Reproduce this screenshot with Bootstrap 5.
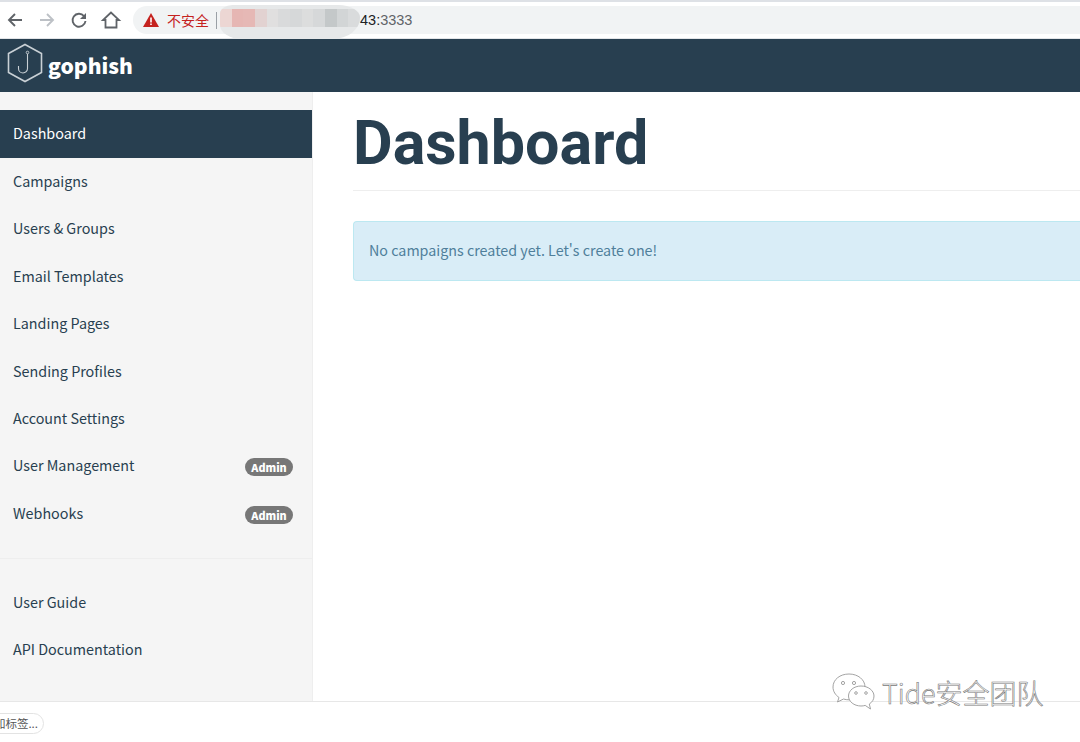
<!DOCTYPE html>
<html lang="zh"><head><meta charset="utf-8"><title>Gophish</title>
<link href="https://cdn.jsdelivr.net/npm/bootstrap@5.3.0/dist/css/bootstrap.min.css" rel="stylesheet">
<style>
html,body{height:742px;overflow:hidden;background:#fff}
body{font-family:"Noto Sans CJK SC","Liberation Sans",sans-serif;position:relative;width:1080px}
.top-strip{height:2px;background:#dee1e6}
.chrome-bar{height:37px;background:#fff;border-bottom:1px solid #e3e5e8;padding-left:0}
.chrome-btn{width:32px;height:24px;flex:none;margin-right:0}
.chrome-btn.first{margin-left:-1px}
.omni{height:28px;flex:1;margin-left:6px;background:#f1f3f4;border-radius:14px 0 0 14px;padding-left:10px;font-size:14.5px;position:relative;line-height:28px;white-space:nowrap}
.warn-txt{color:#c5221f;margin-left:8px;font-size:14px}
.omni-sep{width:1px;height:17px;background:#9aa0a6;margin:0 8px 0 7px}
.host-hide{width:135px;flex:none}
.port-a{color:#202124;font-family:"Liberation Sans",sans-serif}.port-b{color:#5f6368;font-family:"Liberation Sans",sans-serif}
.smear{position:absolute;left:87px;top:-1px;width:140px;height:34px;display:flex;background:#e6e8e9;border-radius:14px 24px 30px 24px/10px 14px 24px 16px;overflow:hidden;padding:4px 0 12px}
.smear i{flex:1;display:block}
.gp-nav{height:53px;background:#283f50;padding:0 0 0 7px}
.gp-logo{margin-bottom:5px}
.gp-brand{color:#fff;font-weight:900;font-size:21px;line-height:1;margin-left:5px;padding-bottom:1px}
.gp-body{height:609px}
.gp-side{width:313px;flex:none;background:#f5f5f5;border-right:1px solid #eee;padding-top:18px}
.gp-link{display:flex;align-items:center;justify-content:space-between;height:47.43px;padding:0 19px 2px 13px;color:#283f50;font-size:14.35px;text-decoration:none}
.gp-link.on{background:#283f50;color:#fff;height:48px}
.gp-link.low{height:47px}
.gp-badge{background:#777;color:#fff;font-size:10.8px;font-weight:900;border-radius:10px;height:18px;line-height:18px;width:48px;text-align:center;margin-top:4px}
.gp-rule{border-top:1px solid #eee;margin:21px 0 20px}
.gp-main{flex:1;padding:0 0 0 40px;min-width:0}
.gp-title{font-family:Roboto,sans-serif;font-weight:700;font-size:61px;color:#283f50;line-height:70px;margin:0;padding-top:16px}
.gp-head{border-bottom:1px solid #eee;height:99px}
.gp-alert{margin-top:30px;height:60px;background:#d9edf7;border:1px solid #bce8f1;border-right:0;border-radius:4px 0 0 4px;color:#4f7f9b;font-size:14.3px;padding:0 15px;line-height:55px}
.gp-foot{height:41px;border-top:1px solid #e7e7e7;background:#fff;position:relative}
.tab-bubble{position:absolute;left:-8px;top:11px;width:52px;height:21px;background:#fff;border:1px solid #e3e3e3;border-radius:0 11px 11px 0;font-size:11.5px;line-height:19px;color:#555;white-space:nowrap;text-align:right;padding-right:5px;overflow:hidden}
.mark-wm{position:absolute;left:832px;top:673px;display:flex;align-items:center;gap:6px;color:#fff;font-size:27px;line-height:1;-webkit-text-stroke:.6px #777;font-weight:300}
</style></head><body>
<div class="top-strip"></div>
<div class="chrome-bar d-flex align-items-center">
  <svg class="chrome-btn first" viewBox="0 0 32 24" fill="none" stroke="#5f6368" stroke-width="1.9"><path d="M23 12H10M16 6l-6 6 6 6"/></svg>
  <svg class="chrome-btn" viewBox="0 0 32 24" fill="none" stroke="#bdc1c6" stroke-width="1.9"><path d="M9 12h13M16 6l6 6-6 6"/></svg>
  <svg class="chrome-btn" viewBox="0 0 32 24" fill="none" stroke="#5f6368" stroke-width="1.9"><path d="M21 8A6.500 6.500 0 1 0 22.500 13"/><path d="M23 5v6h-6z" fill="#5f6368" stroke="none"/></svg>
  <svg class="chrome-btn" viewBox="0 0 32 24" fill="none" stroke="#5f6368" stroke-width="1.8"><path d="M16 4.500 8 12h2.500v7.500h11V12H24z"/></svg>
  <div class="omni d-flex align-items-center">
    <svg width="16" height="14" viewBox="0 0 16 14"><path d="M8 0 16 14H0z" fill="#c5221f"/><path d="M7.200 4.500h1.600v5H7.200zM7.200 10.500h1.600v1.600H7.200z" fill="#fff"/></svg>
    <span class="warn-txt">不安全</span><span class="omni-sep"></span><span class="host-hide"></span><span class="port-a">43:</span><span class="port-b">3333</span>
    <div class="smear" aria-hidden="true"><i style="background:#ecd6d3"></i><i style="background:#e6b6b3"></i><i style="background:#e6b8b5"></i><i style="background:#e2d2d1"></i><i style="background:#e0dfdf"></i><i style="background:#d9dadb"></i><i style="background:#d6d8d9"></i><i style="background:#dcdddd"></i><i style="background:#d6d8d9"></i><i style="background:#c4c8c9"></i><i style="background:#d2d5d6"></i><i style="background:#d9dbdc"></i></div>
  </div>
</div>
<nav class="gp-nav d-flex align-items-center">
  <svg class="gp-logo" width="36" height="40" viewBox="0 0 36 40" fill="none" stroke="#c9d0d5" stroke-width="1.600"><path d="M18 1.500 34.500 10.500v19L18 38.500 1.500 29.500v-19z"/><path d="M20.500 11v14.500a4.500 4.500 0 0 1-9 0v-2.500" stroke-width="1.100"/><circle cx="20.500" cy="9.500" r="1.300" stroke-width=".9"/></svg>
  <span class="gp-brand">gophish</span>
</nav>
<div class="gp-body d-flex">
  <aside class="gp-side">
    <a class="gp-link on" href="#">Dashboard</a>
    <a class="gp-link" href="#">Campaigns</a>
    <a class="gp-link" href="#">Users &amp; Groups</a>
    <a class="gp-link" href="#">Email Templates</a>
    <a class="gp-link" href="#">Landing Pages</a>
    <a class="gp-link" href="#">Sending Profiles</a>
    <a class="gp-link" href="#">Account Settings</a>
    <a class="gp-link" href="#">User Management<span class="gp-badge">Admin</span></a>
    <a class="gp-link" href="#">Webhooks<span class="gp-badge">Admin</span></a>
    <div class="gp-rule"></div>
    <a class="gp-link low" href="#">User Guide</a>
    <a class="gp-link low" href="#">API Documentation</a>
  </aside>
  <main class="gp-main">
    <div class="gp-head"><h1 class="gp-title">Dashboard</h1></div>
    <div class="gp-alert">No campaigns created yet. Let's create one!</div>
  </main>
</div>
<div class="gp-foot"><div class="tab-bubble">加标签...</div></div>
<div class="mark-wm">
  <svg width="44" height="38" viewBox="0 0 44 38" fill="#fff" stroke="#999" stroke-width=".9"><path d="M17 1C8 1 1 6.500 1 14c0 4.500 2.500 8 6 10.500L5.500 29l6-3c2 .6 3.500.8 5.500.8 9 0 16-5.500 16-12.800S26 1 17 1z"/><path d="M29 13c-7 0-12.500 4.500-12.500 10S22 33 29 33c1.600 0 3-.2 4.200-.6L38.500 36l-1.200-5C40.500 29 42 26.200 42 23c0-5.500-6-10-13-10z"/><circle cx="11" cy="10" r="1.600"/><circle cx="22" cy="10" r="1.600"/><circle cx="24" cy="20" r="1.300"/><circle cx="34" cy="20" r="1.300"/></svg>
  <span>Tide安全团队</span>
</div>
<script src="https://cdn.jsdelivr.net/npm/bootstrap@5.3.0/dist/js/bootstrap.bundle.min.js"></script>
</body></html>
